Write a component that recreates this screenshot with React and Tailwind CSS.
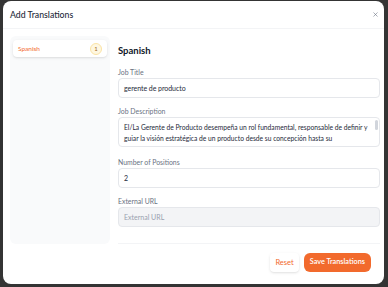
import { X } from 'lucide-react';

const descriptionLines = [
    "El/La Gerente de Producto desempeña un rol fundamental, responsable de definir y",
    "guiar la visión estratégica de un producto desde su concepción hasta su",
    "lanzamiento. Esta persona colabora con las partes interesadas y equipos",
    "multifuncionales para garantizar el éxito del producto.",
];

function Label({ children }) {
    return <div className="text-[6.9px] leading-[8px] text-gray-500 mb-[2px]">{children}</div>;
}

export default function App() {
    return (
        <div className="w-[388px] h-[287px] bg-[#343434] pt-[1px] pl-[3px] font-['Lato',sans-serif] overflow-hidden">
            <div className="w-[381px] h-[283px] bg-white rounded-lg flex flex-col">
                {/* header */}
                <div className="h-[28px] flex items-center justify-between pl-[7px] pr-[5px] border-b border-gray-100">
                    <h2 className="text-[8.7px] font-medium text-gray-800">Add Translations</h2>
                    <X size={7} className="text-gray-500" strokeWidth={2} />
                </div>

                <div className="flex gap-[8px] pl-[7px] pr-[4px] pt-[7px]">
                    {/* sidebar */}
                    <div className="w-[100px] h-[208px] bg-gray-50 rounded-md pt-[4px] px-[3px]">
                        <div className="h-[17px] bg-white rounded shadow-sm flex items-center justify-between pl-[5px] pr-[5px]">
                            <span className="text-[6.5px] text-[#f26a2d]">Spanish</span>
                            <span className="w-[12px] h-[12px] rounded-full bg-[#fef7e1] border border-[#fbe3a4] flex items-center justify-center text-[6px] text-[#a36a1c]">
                                1
                            </span>
                        </div>
                    </div>

                    {/* form */}
                    <div className="flex-1 h-[208px] border-b border-gray-100">
                        <h3 className="text-[9.5px] font-bold text-gray-900 mt-[9px] mb-[11px] leading-[12px]">Spanish</h3>

                        <Label>Job Title</Label>
                        <div className="h-[20px] border border-gray-200 rounded flex items-center px-[5px] text-[7px] tracking-[-0.05px] text-gray-800">
                            gerente de producto
                        </div>

                        <div className="mt-[9px]">
                            <Label>Job Description</Label>
                            <div className="relative h-[30px] border border-gray-200 rounded overflow-hidden pl-[5px] pr-[6px] pt-[4px] text-[6.7px] leading-[11px] text-gray-800 whitespace-nowrap">
                                {descriptionLines.map((line, i) => (
                                    <div key={i}>{line}</div>
                                ))}
                                <div className="absolute right-[1px] top-[2px] w-[3px] h-[10px] rounded bg-gray-300" />
                            </div>
                        </div>

                        <div className="mt-[11px]">
                            <Label>Number of Positions</Label>
                            <div className="h-[20px] border border-gray-200 rounded flex items-center px-[5px] text-[7px] text-gray-800">
                                2
                            </div>
                        </div>

                        <div className="mt-[9px]">
                            <Label>External URL</Label>
                            <div className="h-[20px] bg-gray-100 border border-gray-200 rounded flex items-center px-[5px] text-[7px] text-gray-400">
                                External URL
                            </div>
                        </div>
                    </div>
                </div>

                {/* footer */}
                <div className="h-[40px] flex items-center justify-end gap-[5px] pr-[13px] pb-[3px]">
                    <button className="h-[19px] px-[5px] rounded bg-white shadow-sm text-[7.5px] text-[#f26a2d]">Reset</button>
                    <button className="h-[19px] px-[6px] rounded-md bg-[#f26a2d] text-[7.3px] font-semibold text-white">
                        Save Translations
                    </button>
                </div>
            </div>
        </div>
    );
}
